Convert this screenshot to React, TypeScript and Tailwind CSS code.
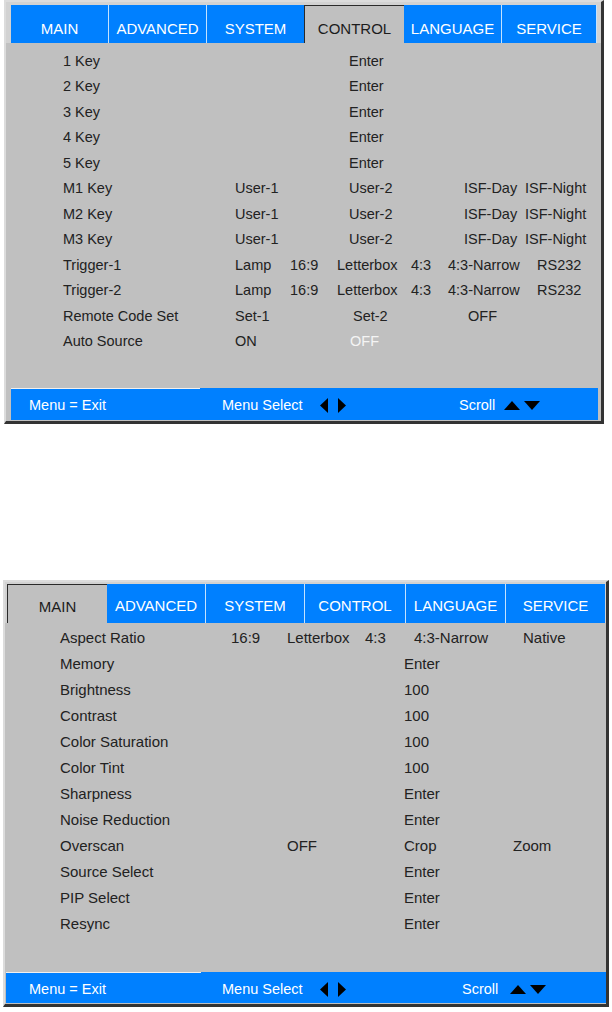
import React from "react";

type Cell = { t: string; x: number; white?: boolean };

const P1_ROWS: Cell[][] = [
  [{ t: "1 Key", x: 63 }, { t: "Enter", x: 349 }],
  [{ t: "2 Key", x: 63 }, { t: "Enter", x: 349 }],
  [{ t: "3 Key", x: 63 }, { t: "Enter", x: 349 }],
  [{ t: "4 Key", x: 63 }, { t: "Enter", x: 349 }],
  [{ t: "5 Key", x: 63 }, { t: "Enter", x: 349 }],
  [{ t: "M1 Key", x: 63 }, { t: "User-1", x: 235 }, { t: "User-2", x: 349 }, { t: "ISF-Day", x: 464 }, { t: "ISF-Night", x: 525 }],
  [{ t: "M2 Key", x: 63 }, { t: "User-1", x: 235 }, { t: "User-2", x: 349 }, { t: "ISF-Day", x: 464 }, { t: "ISF-Night", x: 525 }],
  [{ t: "M3 Key", x: 63 }, { t: "User-1", x: 235 }, { t: "User-2", x: 349 }, { t: "ISF-Day", x: 464 }, { t: "ISF-Night", x: 525 }],
  [{ t: "Trigger-1", x: 63 }, { t: "Lamp", x: 235 }, { t: "16:9", x: 290 }, { t: "Letterbox", x: 337 }, { t: "4:3", x: 411 }, { t: "4:3-Narrow", x: 448 }, { t: "RS232", x: 537 }],
  [{ t: "Trigger-2", x: 63 }, { t: "Lamp", x: 235 }, { t: "16:9", x: 290 }, { t: "Letterbox", x: 337 }, { t: "4:3", x: 411 }, { t: "4:3-Narrow", x: 448 }, { t: "RS232", x: 537 }],
  [{ t: "Remote Code Set", x: 63 }, { t: "Set-1", x: 235 }, { t: "Set-2", x: 353 }, { t: "OFF", x: 468 }],
  [{ t: "Auto Source", x: 63 }, { t: "ON", x: 235 }, { t: "OFF", x: 350, white: true }],
];

const P2_ROWS: Cell[][] = [
  [{ t: "Aspect Ratio", x: 60 }, { t: "16:9", x: 231 }, { t: "Letterbox", x: 287 }, { t: "4:3", x: 365 }, { t: "4:3-Narrow", x: 414 }, { t: "Native", x: 523 }],
  [{ t: "Memory", x: 60 }, { t: "Enter", x: 404 }],
  [{ t: "Brightness", x: 60 }, { t: "100", x: 404 }],
  [{ t: "Contrast", x: 60 }, { t: "100", x: 404 }],
  [{ t: "Color Saturation", x: 60 }, { t: "100", x: 404 }],
  [{ t: "Color Tint", x: 60 }, { t: "100", x: 404 }],
  [{ t: "Sharpness", x: 60 }, { t: "Enter", x: 404 }],
  [{ t: "Noise Reduction", x: 60 }, { t: "Enter", x: 404 }],
  [{ t: "Overscan", x: 60 }, { t: "OFF", x: 287 }, { t: "Crop", x: 404 }, { t: "Zoom", x: 513 }],
  [{ t: "Source Select", x: 60 }, { t: "Enter", x: 404 }],
  [{ t: "PIP Select", x: 60 }, { t: "Enter", x: 404 }],
  [{ t: "Resync", x: 60 }, { t: "Enter", x: 404 }],
];

function Row({ cells, left, rowClass }: { cells: Cell[]; left: number; rowClass: string }) {
  return (
    <div className={rowClass}>
      <span className="flex-none" style={{ width: cells[0].x - left }} />
      {cells.map((c, i) => {
        const next = cells[i + 1];
        return (
          <span
            key={i}
            className={
              c.white
                ? "flex-none whitespace-nowrap text-[#f4f4f4]"
                : "flex-none whitespace-nowrap text-[#222222]"
            }
            style={next ? { width: next.x - c.x } : undefined}
          >
            {c.t}
          </span>
        );
      })}
    </div>
  );
}

function LeftTri() {
  return (
    <svg width="8" height="15" viewBox="0 0 8 15" className="block">
      <polygon points="8,0 8,15 0,7.5" fill="#000" />
    </svg>
  );
}
function RightTri() {
  return (
    <svg width="8" height="15" viewBox="0 0 8 15" className="block">
      <polygon points="0,0 0,15 8,7.5" fill="#000" />
    </svg>
  );
}
function UpTri() {
  return (
    <svg width="16" height="9" viewBox="0 0 16 9" className="block">
      <polygon points="0,9 16,9 8,0" fill="#000" />
    </svg>
  );
}
function DownTri() {
  return (
    <svg width="16" height="9" viewBox="0 0 16 9" className="block">
      <polygon points="0,0 16,0 8,9" fill="#000" />
    </svg>
  );
}

const BLUE_TAB_1 =
  "flex-none flex items-center justify-center pt-[8px] bg-[#0080ff] text-white border-r border-r-[#c4e2ff]";
const ACTIVE_TAB_1 =
  "flex-none flex items-center justify-center pt-[8px] bg-[#c0c0c0] text-[#1c1c1c] border-l border-t border-l-[#2a2a2a] border-t-[#2a2a2a]";
const BLUE_TAB_2 =
  "flex-none flex items-center justify-center pt-[4px] bg-[#0080ff] text-white border-r border-r-[#c4e2ff]";
const ACTIVE_TAB_2 =
  "flex-none flex items-center justify-center pt-[4px] bg-[#c0c0c0] text-[#1c1c1c] border-l border-t border-l-[#2a2a2a] border-t-[#2a2a2a]";

export default function App() {
  return (
    <div className="w-[612px] h-[1012px] bg-white font-['Liberation_Sans',Arial,sans-serif] overflow-hidden">
      {/* Panel 1 - CONTROL */}
      <div className="ml-[4px] w-[600px] bg-[#c0c0c0] border-t-2 border-l-2 border-t-[#dcdcdc] border-l-[#dcdcdc] border-r-[3px] border-b-[3px] border-r-[#333333] border-b-[#333333]">
        <div className="flex bg-[#d2d2d2] pt-[3px] pl-[5px] text-[15px] leading-none h-[41px]">
          <div className={BLUE_TAB_1 + " w-[98px]"}>MAIN</div>
          <div className={BLUE_TAB_1 + " w-[98px]"}>ADVANCED</div>
          <div className="flex-none flex items-center justify-center pt-[8px] bg-[#0080ff] text-white w-[97px]">SYSTEM</div>
          <div className={ACTIVE_TAB_1 + " w-[100px]"}>CONTROL</div>
          <div className={BLUE_TAB_1 + " w-[98px]"}>LANGUAGE</div>
          <div className={BLUE_TAB_1 + " w-[95px]"}>SERVICE</div>
        </div>
        <div className="pt-[5px] text-[14.5px] leading-none">
          {P1_ROWS.map((r, i) => (
            <Row key={i} cells={r} left={6} rowClass="flex items-center h-[25.5px]" />
          ))}
        </div>
        <div className="h-[34px]" />
        <div className="ml-[5px] w-[587px] h-[32px] bg-[#0080ff] flex flex-col">
          <div className="h-px w-[189px] bg-[#f0f0f0]" />
          <div className="flex items-center flex-1 pt-[2px] text-white text-[14.5px] leading-none">
            <span className="flex-none w-[18px]" />
            <span className="flex-none w-[193px]">Menu = Exit</span>
            <span className="flex-none w-[98px]">Menu Select</span>
            <span className="flex-none w-[139px] flex items-center gap-[10px]">
              <LeftTri />
              <RightTri />
            </span>
            <span className="flex-none w-[45px]">Scroll</span>
            <span className="flex items-center gap-[4px]">
              <UpTri />
              <DownTri />
            </span>
          </div>
        </div>
        <div className="h-px" />
      </div>

      <div className="h-[156px]" />

      {/* Panel 2 - MAIN */}
      <div className="ml-[3px] w-[606px] bg-[#c0c0c0] border-t-2 border-l-2 border-t-[#dcdcdc] border-l-[#dcdcdc] border-r-[3px] border-b-[3px] border-r-[#333333] border-b-[#333333]">
        <div className="flex bg-[#d2d2d2] pt-[2px] pl-[2px] text-[15px] leading-none h-[41px]">
          <div className={ACTIVE_TAB_2 + " w-[100px]"}>MAIN</div>
          <div className={BLUE_TAB_2 + " w-[99px]"}>ADVANCED</div>
          <div className={BLUE_TAB_2 + " w-[99px]"}>SYSTEM</div>
          <div className={BLUE_TAB_2 + " w-[101px]"}>CONTROL</div>
          <div className={BLUE_TAB_2 + " w-[100px]"}>LANGUAGE</div>
          <div className="flex-none flex items-center justify-center pt-[4px] bg-[#0080ff] text-white w-[99px]">SERVICE</div>
        </div>
        <div className="pt-[1px] text-[15px] leading-none">
          {P2_ROWS.map((r, i) => (
            <Row key={i} cells={r} left={5} rowClass="flex items-center h-[26px]" />
          ))}
        </div>
        <div className="h-[36px]" />
        <div className="ml-px w-[600px] h-[31px] bg-[#0080ff] flex flex-col">
          <div className="h-px w-[195px] bg-[#f0f0f0]" />
          <div className="flex items-center flex-1 pt-[2px] text-white text-[14.5px] leading-none">
            <span className="flex-none w-[23px]" />
            <span className="flex-none w-[193px]">Menu = Exit</span>
            <span className="flex-none w-[98px]">Menu Select</span>
            <span className="flex-none w-[142px] flex items-center gap-[10px]">
              <LeftTri />
              <RightTri />
            </span>
            <span className="flex-none w-[48px]">Scroll</span>
            <span className="flex items-center gap-[4px]">
              <UpTri />
              <DownTri />
            </span>
          </div>
        </div>
        <div className="h-px" />
      </div>
    </div>
  );
}
